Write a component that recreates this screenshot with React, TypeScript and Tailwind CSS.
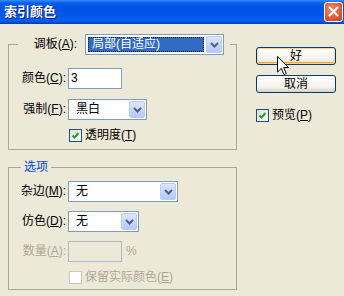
import React from "react";

const Chevron = () => (
  <svg width="9" height="6" viewBox="0 0 9 6">
    <path d="M1 1 L4.5 4.5 L8 1" fill="none" stroke="#4D6185" strokeWidth="2" />
  </svg>
);

const DropArrow = () => (
  <div className="w-[16px] m-[1px] ml-0 rounded-[2px] border border-[#BACCF4] bg-[linear-gradient(to_bottom,#DCE6FD,#B4C8F7)] flex items-center justify-center">
    <Chevron />
  </div>
);

const Combo = ({
  width,
  value,
  focused = false,
}: {
  width: string;
  value: string;
  focused?: boolean;
}) => (
  <div className={`h-[21px] border border-[#7F9DB9] bg-white flex ${width}`}>
    {focused ? (
      <div className="flex-1 flex items-center pl-[2px] pr-[2px]">
        <span className="flex-1 h-[15px] bg-[#316AC5] border border-dotted border-[#1A1A1A] text-white leading-[13px] pl-[3px]">
          {value}
        </span>
      </div>
    ) : (
      <div className="flex-1 flex items-center pl-[7px]">{value}</div>
    )}
    <DropArrow />
  </div>
);

const Checkbox = ({ checked, disabled = false }: { checked: boolean; disabled?: boolean }) => (
  <div
    className={
      disabled
        ? "w-[13px] h-[13px] border border-[#CAC8BB] bg-white"
        : "w-[13px] h-[13px] border border-[#1C5180] bg-[linear-gradient(135deg,#DCDCD7,#FFFFFF)] flex items-center justify-center"
    }
  >
    {checked ? (
      <svg width="11" height="11" viewBox="0 0 11 11">
        <path d="M2.5 5.5 L4.5 7.5 L8.5 3" fill="none" stroke="#21A121" strokeWidth="2" />
      </svg>
    ) : null}
  </div>
);

const Label = ({ text, acc, disabled = false }: { text: string; acc: string; disabled?: boolean }) => (
  <div className={`w-[59px] text-right pr-[2px] ${disabled ? "text-[#ACA899]" : "text-black"}`}>
    {text}(<u>{acc}</u>):
  </div>
);

const App = () => {
  return (
    <div className="relative w-[344px] h-[296px] overflow-hidden bg-[#ECE9D8] flex flex-col text-[12px] leading-[15px] font-['Tahoma','Liberation_Sans','Noto_Sans_CJK_SC',sans-serif]">
      {/* title bar */}
      <div className="h-[24px] flex items-center justify-between pl-[4px] pr-[1px] border-b border-[#0A3DB0] bg-[linear-gradient(to_bottom,#3A8CFF_0%,#0A5FF0_12%,#0054E3_30%,#0056E8_70%,#0862F5_88%,#0049CC_100%)]">
        <span className="text-white font-bold text-[13px] [text-shadow:1px_1px_#0A1A80]">索引颜色</span>
        <div className="w-[19px] h-[20px] rounded-[3px] border border-white bg-[radial-gradient(circle_at_40%_35%,#F08A6B,#D9512C_70%,#C2401C)] flex items-center justify-center">
          <svg width="11" height="11" viewBox="0 0 11 11">
            <path d="M1.5 1.5 L9.5 9.5 M9.5 1.5 L1.5 9.5" stroke="#FFFFFF" strokeWidth="2" strokeLinecap="round" />
          </svg>
        </div>
      </div>

      <div className="flex">
        {/* left column */}
        <div className="pl-[8px] pt-[10px] flex flex-col">
          <fieldset className="w-[229px] border border-[#A9A799] px-0 pb-[6px] m-0">
            <legend className="ml-[9px] pr-[6px] flex items-center">
              <div className="w-[59px] text-right">
                调板(<u>A</u>):
              </div>
              <div className="ml-[8px]">
                <Combo width="w-[139px]" value="局部(自适应)" focused />
              </div>
            </legend>
            <div className="flex items-center mt-[13px]">
              <Label text="颜色" acc="C" />
              <div className="w-[54px] h-[21px] border border-[#7F9DB9] bg-white pl-[2px] flex items-center">3</div>
            </div>
            <div className="flex items-center mt-[10px]">
              <Label text="强制" acc="F" />
              <Combo width="w-[79px]" value="黑白" />
            </div>
            <div className="flex items-center mt-[8px] pl-[60px] gap-[3px]">
              <Checkbox checked />
              <span>
                透明度(<u>T</u>)
              </span>
            </div>
          </fieldset>

          <fieldset className="w-[229px] mt-[10px] border border-[#A9A799] px-0 pb-[4px] m-0">
            <legend className="ml-[12px] px-[3px] text-[#0046D5]">选项</legend>
            <div className="flex items-center mt-[6px]">
              <Label text="杂边" acc="M" />
              <Combo width="w-[110px]" value="无" />
            </div>
            <div className="flex items-center mt-[9px]">
              <Label text="仿色" acc="D" />
              <Combo width="w-[71px]" value="无" />
            </div>
            <div className="flex items-center mt-[9px]">
              <Label text="数量" acc="A" disabled />
              <div className="w-[54px] h-[21px] border border-[#B0B8C6]" />
              <span className="ml-[4px] text-[#ACA899]">%</span>
            </div>
            <div className="flex items-center mt-[8px] pl-[60px] gap-[3px]">
              <Checkbox checked={false} disabled />
              <span className="text-[#ACA899]">
                保留实际颜色(<u>E</u>)
              </span>
            </div>
          </fieldset>
        </div>

        {/* right column */}
        <div className="ml-[19px] pt-[23px] flex flex-col">
          <button className="w-[80px] h-[18px] rounded-[3px] border border-[#003C74] bg-[linear-gradient(to_bottom,#FFFFFF,#F3F2EC_70%,#E3DFD3)] [box-shadow:inset_0_0_0_1px_#FCD28C,inset_0_-2px_0_#EDA537] flex items-center justify-center text-black">
            好
          </button>
          <button className="mt-[10px] w-[80px] h-[18px] rounded-[3px] border border-[#003C74] bg-[linear-gradient(to_bottom,#FFFFFF,#F3F2EC_70%,#D8D2C2)] flex items-center justify-center text-black">
            取消
          </button>
          <div className="mt-[15px] flex items-center gap-[3px]">
            <Checkbox checked />
            <span>
              预览(<u>P</u>)
            </span>
          </div>
        </div>
      </div>

      {/* mouse pointer */}
      <svg className="absolute left-[277px] top-[56px]" width="13" height="20" viewBox="0 0 13 20">
        <path d="M0.5 0.5 L0.5 16 L4.3 12.4 L7 18.6 L9.3 17.6 L6.7 11.6 L11.6 11.6 Z" fill="#FFFFFF" stroke="#000000" strokeWidth="1" />
      </svg>
    </div>
  );
};

export default App;
